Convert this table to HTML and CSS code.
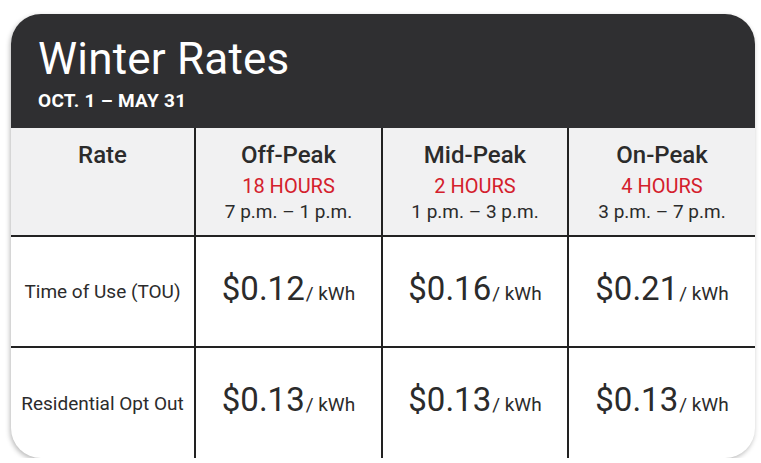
FILE: index.html
```html
<!DOCTYPE html>
<html lang="en">
<head>
<meta charset="utf-8">
<title>Winter Rates</title>
<link rel="stylesheet" href="styles.css">
</head>
<body>
<div class="card">
  <div class="card-head">
    <h1 class="title">Winter Rates</h1>
    <div class="subtitle">OCT. 1 – MAY 31</div>
  </div>
  <div class="grid">
    <div class="cell th"><div class="th-name">Rate</div></div>
    <div class="cell th"><div class="th-name">Off-Peak</div><div class="hours">18 HOURS</div><div class="span">7 p.m. – 1 p.m.</div></div>
    <div class="cell th"><div class="th-name">Mid-Peak</div><div class="hours">2 HOURS</div><div class="span">1 p.m. – 3 p.m.</div></div>
    <div class="cell th last"><div class="th-name">On-Peak</div><div class="hours">4 HOURS</div><div class="span">3 p.m. – 7 p.m.</div></div>

    <div class="cell label">Time of Use (TOU)</div>
    <div class="cell price"><span class="val"><span class="amt">$0.12</span><span class="unit">/ kWh</span></span></div>
    <div class="cell price"><span class="val"><span class="amt">$0.16</span><span class="unit">/ kWh</span></span></div>
    <div class="cell price last"><span class="val"><span class="amt">$0.21</span><span class="unit">/ kWh</span></span></div>

    <div class="cell label bottom">Residential Opt Out</div>
    <div class="cell price bottom"><span class="val"><span class="amt">$0.13</span><span class="unit">/ kWh</span></span></div>
    <div class="cell price bottom"><span class="val"><span class="amt">$0.13</span><span class="unit">/ kWh</span></span></div>
    <div class="cell price bottom last"><span class="val"><span class="amt">$0.13</span><span class="unit">/ kWh</span></span></div>
  </div>
</div>
</body>
</html>
```

FILE: styles.css
```css
html, body {
  margin: 0;
  background: #ffffff;
}
body {
  padding: 14px 6px 0 11px;
  font-family: Roboto, "Liberation Sans", Arial, sans-serif;
  color: #2b2b2b;
}
.card {
  width: 744px;
  height: 444px;
  border-radius: 30px;
  overflow: hidden;
  background: #ffffff;
  box-shadow: -1px 2px 5px rgba(0, 0, 0, 0.28);
  display: flex;
  flex-direction: column;
}
.card-head {
  height: 114px;
  box-sizing: border-box;
  background: #2f2f31;
  color: #ffffff;
  padding: 21px 0 0 27px;
}
.title {
  margin: 0;
  font-weight: 400;
  font-size: 44px;
  line-height: 48px;
  letter-spacing: 0.2px;
}
.subtitle {
  margin-top: 7px;
  font-size: 19px;
  font-weight: 700;
  line-height: 22px;
  letter-spacing: 0.3px;
}
.grid {
  flex: 1;
  display: grid;
  grid-template-columns: 185px 187px 186px 186px;
  grid-template-rows: 109px 111px 1fr;
}
.cell {
  border-right: 2px solid #222222;
  border-bottom: 2px solid #222222;
  display: flex;
  flex-direction: column;
  align-items: center;
  text-align: center;
}
.cell.last { border-right: none; }
.cell.bottom { border-bottom: none; }
.th {
  background: #f1f1f2;
  padding-top: 13px;
}
.th-name {
  font-size: 24px;
  font-weight: 500;
  line-height: 28px;
  color: #2b2b2b;
}
.hours {
  margin-top: 5px;
  font-size: 20px;
  line-height: 24px;
  color: #d4202c;
}
.span {
  margin-top: 2px;
  font-size: 19px;
  line-height: 24px;
  color: #2b2b2b;
}
.label {
  justify-content: center;
  font-size: 19px;
  color: #2b2b2b;
}
.price {
  justify-content: center;
}
.val {
  line-height: 40px;
  white-space: nowrap;
}
.amt {
  font-size: 33px;
  color: #2b2b2b;
}
.unit {
  font-size: 19px;
  color: #2b2b2b;
  margin-left: 1px;
}
```
